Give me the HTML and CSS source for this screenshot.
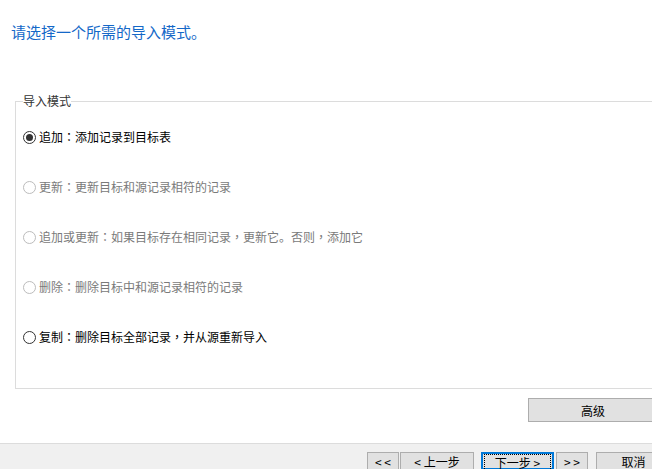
FILE: index.html
```html
<!DOCTYPE html>
<html lang="zh-CN">
<head>
<meta charset="utf-8">
<link rel="stylesheet" href="styles.css">
</head>
<body>
<div class="page">
  <div class="content">
    <h1 class="title">请选择一个所需的导入模式。</h1>
    <fieldset class="group">
      <legend class="legend">导入模式</legend>
      <div class="options">
        <div class="opt"><span class="radio checked"></span><span class="label">追加<span class="p" lang="zh-TW">：</span>添加记录到目标表</span></div>
        <div class="opt disabled"><span class="radio"></span><span class="label">更新<span class="p" lang="zh-TW">：</span>更新目标和源记录相符的记录</span></div>
        <div class="opt disabled"><span class="radio"></span><span class="label">追加或更新<span class="p" lang="zh-TW">：</span>如果目标存在相同记录<span class="p" lang="zh-TW">，</span>更新它。否则<span class="p" lang="zh-TW">，</span>添加它</span></div>
        <div class="opt disabled"><span class="radio"></span><span class="label">删除<span class="p" lang="zh-TW">：</span>删除目标中和源记录相符的记录</span></div>
        <div class="opt"><span class="radio"></span><span class="label">复制<span class="p" lang="zh-TW">：</span>删除目标全部记录<span class="p" lang="zh-TW">，</span>并从源重新导入</span></div>
      </div>
    </fieldset>
    <div class="adv-row"><button class="btn adv">高级</button></div>
  </div>
  <div class="footer">
    <button class="btn b-first">&lt; &lt;</button>
    <button class="btn b-prev">&lt; 上一步</button>
    <button class="btn b-next default"><span class="focus">下一步 &gt;</span></button>
    <button class="btn b-last">&gt; &gt;</button>
    <button class="btn b-cancel">取消</button>
  </div>
</div>
</body>
</html>
```
FILE: styles.css
```css
* { box-sizing: border-box; }
html, body {
  margin: 0;
  padding: 0;
  width: 652px;
  height: 469px;
  overflow: hidden;
  background: #fff;
  font-family: "Noto Sans CJK SC", "Noto Sans", sans-serif;
}
.page {
  width: 652px;
  height: 469px;
  display: flex;
  flex-direction: column;
}
.content {
  height: 443px;
  flex: none;
  display: flex;
  flex-direction: column;
}
.title {
  margin: 22px 0 0 11px;
  font-size: 15px;
  line-height: 20px;
  font-weight: normal;
  color: #1468c8;
}
.group {
  margin: 51px 0 0 15px;
  padding: 0 0 0 7px;
  border: 1px solid #dcdcdc;
  border-right: none;
  height: 296px;
  min-width: 0;
}
.legend {
  padding: 0;
  font-size: 12px;
  line-height: 16px;
  color: #333;
}
.options {
  display: flex;
  flex-direction: column;
  padding-top: 3px;
}
.opt {
  height: 50px;
  display: flex;
  align-items: center;
  gap: 3px;
  font-size: 12px;
  color: #000;
}
.opt.disabled { color: #7a7a7a; }
.p { font-family: "Noto Sans CJK TC", "Noto Sans CJK SC", sans-serif; }
.radio {
  width: 13px;
  height: 13px;
  border: 1px solid #333;
  border-radius: 50%;
  background: #fff;
  display: flex;
  align-items: center;
  justify-content: center;
  flex: none;
}
.opt.disabled .radio { border-color: #bcbcbc; }
.radio.checked::after {
  content: "";
  width: 7px;
  height: 7px;
  border-radius: 50%;
  background: #333;
}
.label { line-height: 16px; }
.adv-row {
  display: flex;
  margin-top: 9px;
  padding-left: 528px;
}
.btn {
  font-family: "Noto Sans CJK SC", "Noto Sans", sans-serif;
  font-size: 12px;
  line-height: 13px;
  color: #000;
  background: #e1e1e1;
  border: 1px solid #adadad;
  padding: 0;
  height: 23px;
  flex: none;
  display: flex;
  align-items: center;
  justify-content: center;
}
.adv { width: 130px; height: 24px; }
.footer {
  flex: none;
  height: 26px;
  border-top: 1px solid #dcdcdc;
  background: #f0f0f0;
  display: flex;
  align-items: flex-start;
  padding: 8px 0 0 367px;
  overflow: hidden;
}
.footer .btn { height: 17px; border-bottom: none; }
.b-first { width: 32px; }
.b-prev { width: 74px; margin-left: 1px; }
.b-next { width: 73px; margin-left: 7px; }
.b-last { width: 32px; margin-left: 2px; }
.b-cancel { width: 75px; margin-left: 8px; }
.default {
  border: 1px solid #0078d7;
  box-shadow: inset 0 0 0 1px #0078d7;
  padding: 1px 2px 0;
}
.footer .default { border-bottom: none; }
.focus {
  width: 100%;
  height: 100%;
  border: 1px dotted #000;
  border-bottom: none;
  display: flex;
  align-items: center;
  justify-content: center;
}
```
